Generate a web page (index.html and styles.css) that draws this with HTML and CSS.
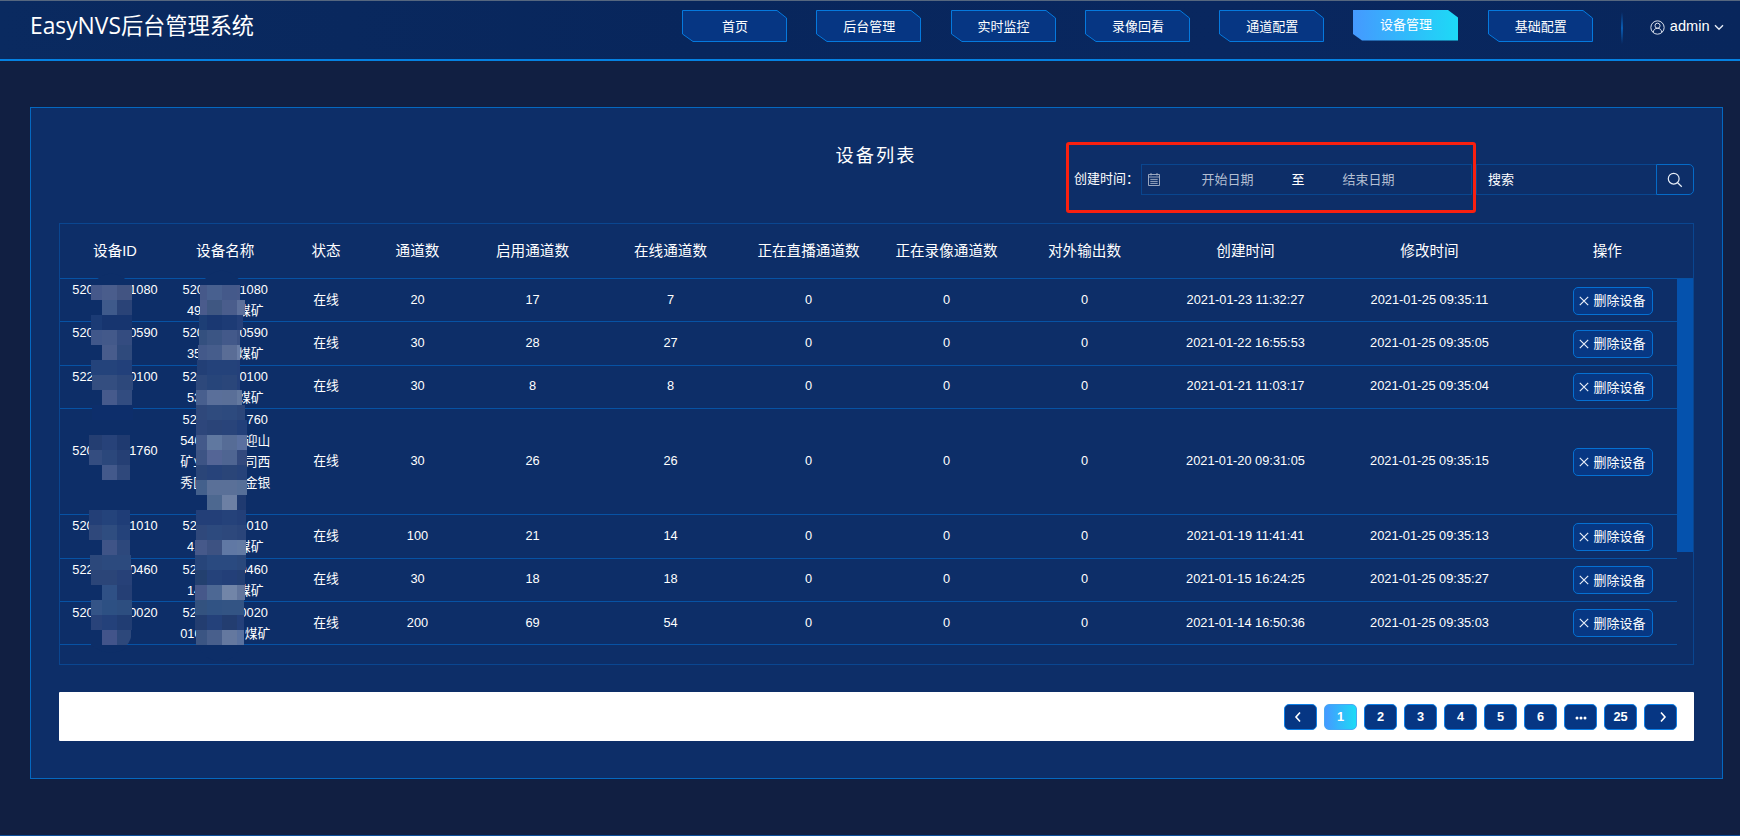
FILE: index.html
```html
<!DOCTYPE html>
<html lang="zh-CN">
<head>
<meta charset="utf-8">
<title>EasyNVS后台管理系统</title>
<link rel="stylesheet" href="styles.css">
</head>
<body>
<header class="topbar">
  <h1 class="brand"><span class="brand-latin">EasyNVS</span><span>后台管理系统</span></h1>
  <nav class="nav" id="nav"></nav>
  <div class="divider"></div>
  <div class="user">
    <svg class="user-icon" viewBox="0 0 16 16"><circle cx="8" cy="8" r="7.1"/><circle cx="8" cy="6.1" r="2.7"/><path d="M3.4 13.2C3.7 10.5 5.4 8.8 8 8.8s4.300 1.700 4.600 4.400"/></svg>
    <span>admin</span>
    <svg class="chevron" viewBox="0 0 10 7"><path d="M1 1.200l4 4 4-4"/></svg>
  </div>
</header>
<main class="panel">
  <h2 class="panel-title">设备列表</h2>
  <div class="filters">
    <label class="filter-label">创建时间：</label>
    <div class="daterange">
      <svg class="cal" viewBox="0 0 12 13"><path d="M.5 1.500h11v11H.5zM.5 4h11M3 0v2.500M9 0v2.500M2.300 6.400h7.400M2.300 8.400h7.400M2.300 10.400h7.400"/></svg>
      <span class="date-field start">开始日期</span>
      <span class="date-sep">至</span>
      <span class="date-field end">结束日期</span>
    </div>
    <div class="search-input">搜索</div>
    <button class="search-btn"><svg viewBox="0 0 16 16"><circle cx="6.700" cy="6.700" r="5.400"/><path d="M10.600 10.800l4.200 4"/></svg></button>
    <div class="callout"></div>
  </div>
  <section class="table">
    <div class="row head" id="head"></div>
    <div class="body">
      <div class="rows" id="rows"></div>
      <div class="scroll"><div class="thumb"></div></div>
    </div>
    <svg class="mosaic" id="mosaic" viewBox="60 265 200 400"></svg>
  </section>
  <footer class="pager" id="pager"></footer>
</main>
<script src="app.js"></script>
</body>
</html>
```
FILE: styles.css
```css
* { box-sizing: border-box; }
body {
  margin: 0;
  height: 836px;
  overflow: hidden;
  background: #111f42;
  border-bottom: 1px solid #0c4f9c;
  color: #fff;
  font: 12.8px/21.3px "Liberation Sans", "Noto Sans CJK SC", sans-serif;
}
h1, h2 { margin: 0; font-weight: 400; }
.topbar {
  height: 61px;
  display: flex;
  align-items: flex-start;
  border-top: 1px solid #56677f;
  border-bottom: 2px solid #0581e2;
  padding-left: 30px;
  background: linear-gradient(90deg, #0a2a60, #08265c 40%, #09275f 70%, #08265c);
}
.brand { width: 652px; padding-top: 7px; font: 22.200px/32px "Noto Sans CJK SC", sans-serif; white-space: nowrap; }
.brand-latin { font-family: "Open Sans", sans-serif; font-size: 22.800px; }
.nav { display: flex; gap: 29.300px; padding-top: 9px; }
.nav-item { position: relative; width: 105px; height: 32px; padding-left: 1px; font-size: 13px; line-height: 34px; text-align: center; }
.nav-item.active { line-height: 30px; padding-left: 0; }
.nav-shape { position: absolute; left: 0; top: 0; width: 105px; height: 32px; }
.nav-text { position: relative; }
.divider { width: 2px; height: 32px; margin: 11px 0 0 28px; background: linear-gradient(#0a53a500, #0a5db3, #0a53a500); }
.user { display: flex; align-items: center; height: 30px; margin: 11px 0 0 27px; font-size: 14.600px; }
.user-icon { width: 15px; height: 15px; margin-right: 5px; fill: none; stroke: #e6ecf5; }
.chevron { width: 10px; height: 7px; margin-left: 4px; fill: none; stroke: #e6ecf5; stroke-width: 1.400; }
.panel {
  width: 1693px;
  height: 672px;
  margin: 46px 0 0 30px;
  padding: 35px 28px 0;
  background: #0d2e68;
  border: 1px solid #0568c0;
}
.panel-title { height: 21px; padding-right: 1px; font-size: 18.200px; line-height: 27px; letter-spacing: 2px; text-align: center; }
.filters { position: relative; display: flex; justify-content: flex-end; height: 31px; line-height: 29px; }
.filter-label { width: 67px; font-size: 13px; white-space: nowrap; line-height: 30px; }
.daterange { display: flex; align-items: center; width: 331px; border: 1px solid #09468f; padding-left: 6px; color: #b4bfd2; font-size: 13px; }
.cal { width: 12px; height: 13px; fill: none; stroke: #a9b4c8; stroke-width: .9; }
.date-field { text-align: center; }
.date-field.start { width: 126px; padding-left: 9px; }
.date-field.end { width: 117px; }
.date-sep { width: 24px; color: #fff; text-align: center; }
.search-input { width: 180px; margin-left: 4px; padding-left: 11px; border: 1px solid #09468f; border-right: 0; font-size: 13px; }
.search-btn { display: flex; align-items: center; justify-content: center; width: 38px; padding: 0; border: 1px solid #056bc8; border-radius: 0 5px 5px 0; background: none; }
.search-btn svg { width: 16px; height: 16px; fill: none; stroke: #e8eef7; stroke-width: 1.200; }
.callout { position: absolute; left: 1007px; top: -22px; width: 410px; height: 71px; border: 3px solid #f9200f; border-radius: 3px; }
.table { position: relative; height: 442px; margin-top: 28px; border: 1px solid #0a4690; }
.row { display: grid; grid-template-columns: 110px 110.500px 91px 92px 138px 138px 138px 138px 138px 184px 184px 1fr; align-items: center; border-bottom: 1px solid #0752a4; text-align: center; }
.head { height: 55px; font-size: 14.600px; padding-top: 2px; }
.body { display: flex; }
.rows { width: 1618px; }
.rows .row { height: 43.250px; }
.rows .row.tall { height: 106.500px; }
.value { padding-bottom: 1.500px; }
.line { display: flex; justify-content: space-between; margin: 0 auto; height: 21.200px; white-space: nowrap; }
.stack { height: 42.400px; }
.stack.five { height: 106px; }
.tall .stack:first-child { margin-top: -2px; }
.del { display: flex; align-items: center; justify-content: center; width: 80px; height: 28px; margin: 1px 0 0 51px; border: 1px solid #0570d2; border-radius: 5px; background: #073783; white-space: nowrap; font-size: 13px; }
.del svg { width: 10px; height: 10px; margin-right: 4px; fill: none; stroke: #e8eef7; stroke-width: 1.200; }
.thumb { width: 16px; height: 273px; background: #0552ad; }
.mosaic { position: absolute; left: 0; top: 41px; width: 200px; height: 400px; }
.pager { display: flex; align-items: flex-start; justify-content: flex-end; gap: 7px; height: 49px; margin-top: 27px; padding: 12px 17px 0 0; background: #fff; border-radius: 1px; }
.page { display: flex; align-items: center; justify-content: center; width: 33px; height: 26px; border: 1px solid #0c7fe6; border-radius: 5px; background: #063683; font-size: 12.800px; font-weight: 700; }
.page.current { background: linear-gradient(90deg, #4599ff, #1ddaf6); border-color: #46a9f5; }
.page svg { width: 10px; height: 12px; fill: none; stroke: #fff; stroke-width: 1.600; }
.page.prev { padding-right: 6px; }
.page.next { padding-left: 5px; }
.page.dots svg { width: 12px; fill: #fff; stroke: none; }
```
FILE: app.js
```js
const html = (id, markup) => { document.getElementById(id).innerHTML = markup; };

const shape = active => active
  ? '<svg class="nav-shape" viewBox="0 0 105 32"><defs><linearGradient id="g"><stop stop-color="#4599ff"/><stop offset="1" stop-color="#1ddaf6"/></linearGradient></defs><path d="M0 0H95L105 7.500V30.500H9L0 24z" fill="url(#g)"/></svg>'
  : '<svg class="nav-shape" viewBox="0 0 105 32"><path d="M.5 .5H95L104.500 8V31.500H11L.5 24z" fill="#063683" stroke="#0579de"/></svg>';
html('nav', ['首页', '后台管理', '实时监控', '录像回看', '通道配置', '设备管理', '基础配置']
  .map(t => `<div class="nav-item${t === '设备管理' ? ' active' : ''}">${shape(t === '设备管理')}<span class="nav-text">${t}</span></div>`).join(''));

html('head', ['设备ID', '设备名称', '状态', '通道数', '启用通道数', '在线通道数', '正在直播通道数', '正在录像通道数', '对外输出数', '创建时间', '修改时间', '操作']
  .map(t => `<div>${t}</div>`).join(''));

// Each name line: visible start, visible end, line width
const devices = [
  ['520', '1080', [['520', '1080', 85.4], ['49', '煤矿', 76.7]], 20, 17, 7, '2021-01-23 11:32:27', '2021-01-25 09:35:11'],
  ['520', '0590', [['520', '0590', 85.4], ['35', '煤矿', 76.7]], 30, 28, 27, '2021-01-22 16:55:53', '2021-01-25 09:35:05'],
  ['522', '0100', [['522', '0100', 85.4], ['53', '煤矿', 76.7]], 30, 8, 8, '2021-01-21 11:03:17', '2021-01-25 09:35:04'],
  ['520', '1760', [['520', '1760', 85.4], ['540', '迎山', 90], ['矿业', '司西', 90], ['秀区', '金银', 90]], 30, 26, 26, '2021-01-20 09:31:05', '2021-01-25 09:35:15'],
  ['520', '1010', [['520', '1010', 85.4], ['41', '煤矿', 76.7]], 100, 21, 14, '2021-01-19 11:41:41', '2021-01-25 09:35:13'],
  ['522', '0460', [['522', '0460', 85.4], ['14', '煤矿', 76.7]], 30, 18, 18, '2021-01-15 16:24:25', '2021-01-25 09:35:27'],
  ['520', '0020', [['520', '0020', 85.4], ['010', '煤矿', 90]], 200, 69, 54, '2021-01-14 16:50:36', '2021-01-25 09:35:03']
];
const line = ([a, b, w]) => `<div class="line" style="width:${w}px"><span>${a}</span><span>${b}</span></div>`;
html('rows', devices.map(([a, b, name, total, on, live, made, changed]) => {
  const tall = name.length > 2;
  return `<div class="row${tall ? ' tall' : ''}"><div class="stack">${line([a, b, 85.4])}</div>
    <div class="stack${tall ? ' five' : ''}">${name.map(line).join('')}</div>
    ${['在线', total, on, live, 0, 0, 0, made, changed].map(v => `<div class="value">${v}</div>`).join('')}
    <div><div class="del"><svg viewBox="0 0 10 10"><path d="M.8 .8l8.400 8.400M9.200 .8L.8 9.200"/></svg>删除设备</div></div></div>`;
}).join(''));

// Privacy mask: [top, left, right, colours of the 15px blocks]
const base = '#0d2e68';
const idMask = [
  [285, 91, 132, '#45588a #4a5d8c #425482'], [300, 102, 132, '#3f5a8b #2a4377'],
  [315, 91, 132, '#1b3b75 #17356f #17356f'], [330, 91, 132, '#40578a #43598a #344c80'],
  [345, 102, 132, '#485c8c #2f4a7c'], [360, 91, 132, '#24437b #24437b #22407a'],
  [375, 92, 133, '#344e80 #344e80 #2d487b'], [390, 102, 132, '#465a8c #324c80'],
  [405, 92, 133, '#0d2e6b #0d2e6b #0d2e6b'],
  [435, 89, 130, '#243e72 #274279 #1f3a70'], [450, 89, 130, '#344d80 #2b477b #253f74'],
  [465, 102, 130, '#43598b #2f487b'],
  [510, 89, 130, '#233f77 #24437b #1f3d77'], [525, 89, 130, '#2f487b #2f4d80 #24427a'],
  [540, 102, 130, '#3f5487 #2d487c'], [555, 90, 131, '#2c487b #2c4a7e #2c4a7e'],
  [570, 91, 132, '#2b4578 #2b4578 #274178'], [585, 102, 132, '#2f5085 #253f75'],
  [600, 91, 132, '#345487 #2d5083 #2d4e80'], [615, 91, 132, '#29437a #24417a #213d73'],
  [630, 102, 131, '#42548a #2d487b']
];
const nameMask = [
  [285, 200, 240, '#46598a #48608f #44598a #46598a'], [300, 200, 245, '#4a5b8c #3f5782 #4a5d8c #5d709b'],
  [315, 199, 243, '#1d3e75 #1a3872 #1d3b75 #24407a'], [330, 199, 240, '#34507f #3b5584 #43598a #3c5284'],
  [345, 198, 240, '#43598a #465d8c #5a6d96 #6a7ea6'], [360, 197, 240, '#223f76 #24427a #24427a #24407a'],
  [375, 196, 240, '#2d487b #27457a #2a467a #24407a'], [390, 196, 242, '#485f8e #5a6f9a #5a6f98 #64799f'],
  [405, 196, 245, '#2f487b #2f4b7e #2d4a7e #2b467a'], [420, 196, 247, '#2d467b #2a4478 #29447a #23407a'],
  [435, 196, 247, '#43598a #6078a0 #566c96 #5a70a0'], [450, 196, 247, '#3d5485 #546596 #4f6592 #33497d'],
  [465, 196, 247, '#2a4578 #27437a #2a4578 #27437a'], [480, 196, 247, '#43608c #5a7098 #5a7098 #566f98'],
  [495, 207, 246, '#4d6890 #6d80a4 #1f3a70'], [510, 196, 246, '#233f78 #233f78 #25427a #233f78'],
  [525, 196, 246, '#2f487b #2d4a7e #2d487c #2a457a'], [540, 195, 246, '#46598a #3d5282 #6078a4 #627aa3'],
  [555, 195, 246, '#27457a #2a4a80 #2a4a80 #2a487c'], [570, 195, 245, '#23406f #25427a #233f78 #233f74'],
  [585, 195, 245, '#46588a #4d6894 #7285a8 #62759c'], [600, 195, 244, '#33527f #315384 #335484 #335484'],
  [615, 195, 244, '#233d70 #24417a #233d70 #24407a'], [630, 196, 244, '#3b5583 #485f8c #64789f #5a72a0']
];
const paint = (rows, edges) => rows.map(([y, l, r, colours]) => {
  const cuts = [l, ...edges.filter(e => e > l && e < r), r];
  return colours.split(' ').map((c, i) => cuts[i + 1] === undefined ? '' :
    `<rect x="${cuts[i]}" y="${y}" width="${cuts[i + 1] - cuts[i]}" height="15" fill="${c}"/>`).join('');
}).join('');
html('mosaic', `<defs><clipPath id="a"><path d="M60 260H140V620H132V630Q132 640 126 646H60z"/></clipPath></defs>
  <path d="M91 285Q111 262 132 285V300H91zM200 285Q221 256 244 285V286H200z" fill="${base}"/>
  <path d="M91 645H131Q111 660 91 645zM196 640H244Q236 661 220 661Q202 661 196 640z" fill="${base}"/>
  <path d="M91 300h11v15h-11zM91 345h11v15h-11zM91 585h11v15h-11zM91 630h11v15h-11zM89 540h13v15h-13z" fill="${base}"/>
  <g clip-path="url(#a)" shape-rendering="crispEdges">${paint(idMask, [102, 117])}</g>
  <g shape-rendering="crispEdges">${paint(nameMask, [207, 222, 237])}</g>`);

const arrow = d => `<svg viewBox="0 0 10 12"><path d="${d}"/></svg>`;
html('pager', `<div class="page prev">${arrow('M7 1.500L3 6l4 4.500')}</div>`
  + [1, 2, 3, 4, 5, 6].map(n => `<div class="page${n === 1 ? ' current' : ''}">${n}</div>`).join('')
  + '<div class="page dots"><svg viewBox="0 0 12 12"><circle cx="2" cy="7" r="1.500"/><circle cx="6" cy="7" r="1.500"/><circle cx="10" cy="7" r="1.500"/></svg></div><div class="page">25</div>'
  + `<div class="page next">${arrow('M3 1.500L7 6l-4 4.500')}</div>`);
```
